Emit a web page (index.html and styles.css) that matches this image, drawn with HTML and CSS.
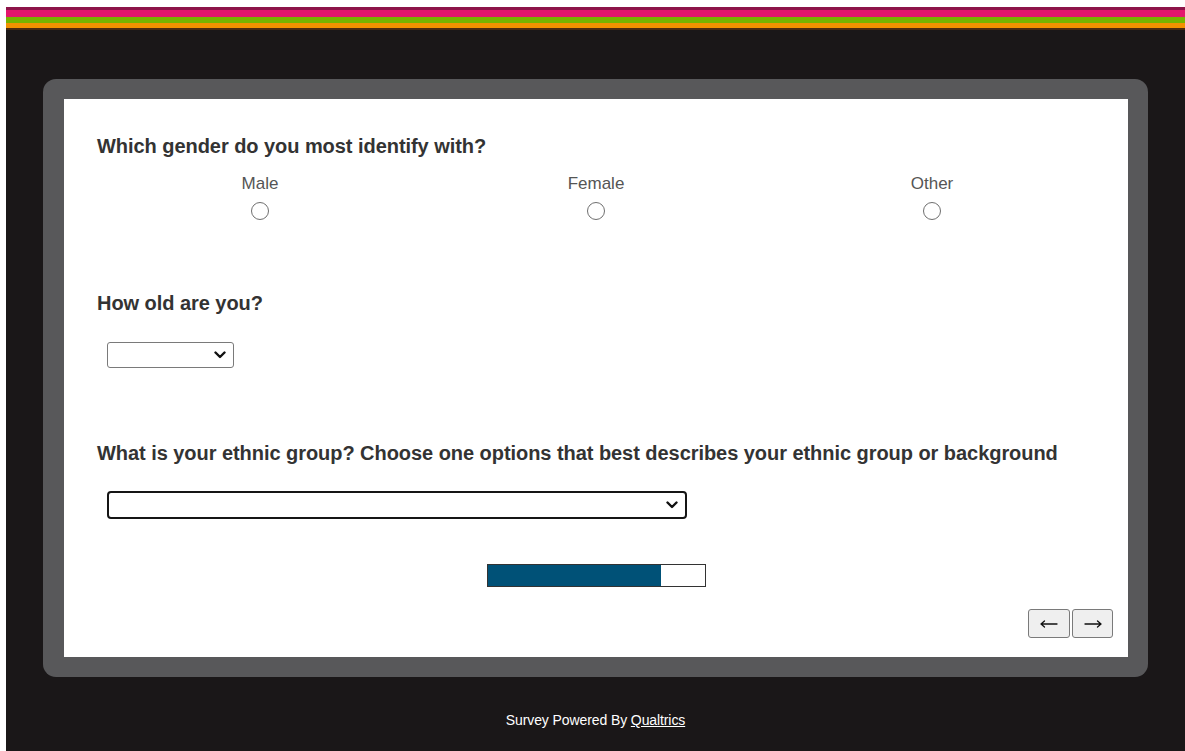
FILE: index.html
```html
<!DOCTYPE html>
<html lang="en">
<head>
<meta charset="utf-8">
<title>Survey</title>
<link rel="stylesheet" href="styles.css">
</head>
<body>
<div class="page">
  <div class="stripes">
    <div class="stripe s-plum"></div>
    <div class="stripe s-pink"></div>
    <div class="stripe s-green"></div>
    <div class="stripe s-orange"></div>
    <div class="stripe s-edge"></div>
  </div>
  <main class="stage">
    <div class="frame">
      <form class="panel">
        <section class="question q-gender">
          <h2 class="q-text">Which gender do you most identify with?</h2>
          <div class="choices">
            <label class="choice"><span class="choice-label">Male</span><input type="radio" name="gender" class="radio"></label>
            <label class="choice"><span class="choice-label">Female</span><input type="radio" name="gender" class="radio"></label>
            <label class="choice"><span class="choice-label">Other</span><input type="radio" name="gender" class="radio"></label>
          </div>
        </section>
        <section class="question q-age">
          <h2 class="q-text">How old are you?</h2>
          <div class="select-box select-age">
            <span class="chev"><svg viewBox="0 0 12 8" width="12" height="8"><path d="M1.5 1.5 L6 6 L10.5 1.5" fill="none" stroke="#111" stroke-width="2.4" stroke-linecap="round" stroke-linejoin="round"/></svg></span>
          </div>
        </section>
        <section class="question q-ethnic">
          <h2 class="q-text">What is your ethnic group? Choose one options that best describes your ethnic group or background</h2>
          <div class="select-box select-ethnic">
            <span class="chev"><svg viewBox="0 0 12 8" width="12" height="8"><path d="M1.5 1.5 L6 6 L10.5 1.5" fill="none" stroke="#111" stroke-width="2.4" stroke-linecap="round" stroke-linejoin="round"/></svg></span>
          </div>
        </section>
        <div class="progress-row">
          <div class="progress"><div class="progress-fill" style="width:80%"></div></div>
        </div>
        <div class="nav">
          <button type="button" class="nav-btn" aria-label="Back"><svg viewBox="0 0 18 10" width="18" height="10"><path d="M1 5 H17 M1 5 L4.5 2 M1 5 L4.5 8" fill="none" stroke="#111" stroke-width="1.3" stroke-linecap="round"/></svg></button>
          <button type="button" class="nav-btn" aria-label="Next"><svg viewBox="0 0 18 10" width="18" height="10"><path d="M1 5 H17 M17 5 L13.5 2 M17 5 L13.5 8" fill="none" stroke="#111" stroke-width="1.3" stroke-linecap="round"/></svg></button>
        </div>
      </form>
    </div>
    <footer class="footer">Survey Powered By <a href="#" class="footer-link">Qualtrics</a></footer>
  </main>
</div>
</body>
</html>
```

FILE: styles.css
```css
html, body {
  margin: 0;
  padding: 0;
  background: #ffffff;
  height: 100%;
}

body {
  font-family: "Liberation Sans", Arial, sans-serif;
  overflow: hidden;
}

.page {
  margin: 7px 0 0 6px;
  background: #1a1718;
  min-height: 744px;
}

.stripes {
  display: flex;
  flex-direction: column;
}

.stripe { width: 100%; }
.s-plum { height: 3px; background: #8d1449; }
.s-pink { height: 7px; background: #e3176d; }
.s-green { height: 6px; background: #78b400; }
.s-orange { height: 5px; background: #f39200; }
.s-edge { height: 2px; background: #4a2a10; }

.stage {
  padding-top: 49px;
}

.frame {
  margin-left: 37px;
  width: 1064px;
  padding: 20px 20px 20px 21px;
  background: #58585a;
  border-radius: 13px;
}

.panel {
  background: #ffffff;
  height: 558px;
  box-sizing: border-box;
  padding: 35px 33px 0 33px;
  display: flex;
  flex-direction: column;
}

.q-text {
  margin: 0;
  font-size: 20px;
  font-weight: bold;
  color: #333333;
  line-height: 24px;
  letter-spacing: -0.05px;
}

.choices {
  display: grid;
  grid-template-columns: repeat(3, 336px);
  margin-left: -5px;
  margin-top: 16px;
}

.choice {
  display: flex;
  flex-direction: column;
  align-items: center;
  gap: 8px;
}

.choice-label {
  font-size: 17px;
  color: #555555;
  line-height: 20px;
}

.radio {
  appearance: none;
  -webkit-appearance: none;
  margin: 0;
  width: 18px;
  height: 18px;
  border: 1px solid #6f6f6f;
  border-radius: 50%;
  background: #fff;
}

.q-age { margin-top: 71px; }
.q-ethnic { margin-top: 73px; }

.select-box {
  position: relative;
  box-sizing: border-box;
  margin-left: 10px;
  background: #fff;
}

.select-age {
  margin-top: 27px;
  width: 127px;
  height: 26px;
  border: 1px solid #7a7a7a;
  border-radius: 3px;
}

.select-ethnic {
  margin-top: 26px;
  width: 580px;
  height: 28px;
  border: 2px solid #151515;
  border-radius: 4px;
}

.chev {
  position: absolute;
  right: 7px;
  top: 50%;
  transform: translateY(-50%);
  display: flex;
}

.progress-row {
  margin-top: 45px;
  display: flex;
  justify-content: center;
}

.progress {
  width: 219px;
  height: 23px;
  box-sizing: border-box;
  border: 1px solid #333;
  background: #fff;
}

.progress-fill {
  height: 100%;
  background: #005177;
}

.nav {
  margin-top: 22px;
  margin-right: -18px;
  display: flex;
  justify-content: flex-end;
  gap: 2px;
}

.nav-btn {
  width: 42px;
  height: 29px;
  padding: 0;
  display: flex;
  align-items: center;
  justify-content: center;
  background: #efefef;
  border: 1px solid #7a7a7a;
  border-radius: 3px;
}
.nav-btn + .nav-btn { width: 41px; }

.footer {
  text-align: center;
  color: #ffffff;
  font-size: 14px;
  padding-top: 35px;
  letter-spacing: -0.1px;
}

.footer-link {
  color: #ffffff;
  text-decoration: underline;
}
```
